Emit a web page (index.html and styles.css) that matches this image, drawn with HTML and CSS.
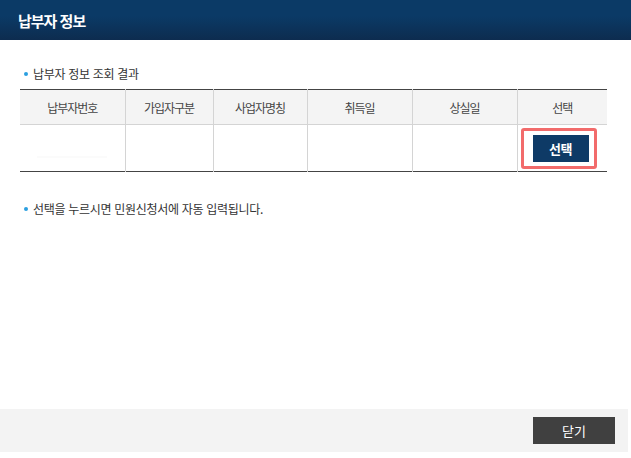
FILE: index.html
```html
<!DOCTYPE html>
<html lang="ko">
<head>
<meta charset="utf-8">
<title>납부자 정보</title>
<link rel="stylesheet" href="styles.css">
</head>
<body>
<div class="popup">
  <header class="pop-head"><h1>납부자 정보</h1></header>
  <main class="pop-body">
    <p class="bullet first">납부자 정보 조회 결과</p>
    <table class="result">
      <colgroup>
        <col class="c1"><col class="c2"><col class="c3"><col class="c4"><col class="c5"><col class="c6">
      </colgroup>
      <thead>
        <tr><th>납부자번호</th><th>가입자구분</th><th>사업자명칭</th><th>취득일</th><th>상실일</th><th>선택</th></tr>
      </thead>
      <tbody>
        <tr>
          <td><span class="blur"></span></td><td></td><td></td><td></td><td></td>
          <td class="sel"><span class="hl"><button class="btn-sel" type="button">선택</button></span></td>
        </tr>
      </tbody>
    </table>
    <p class="bullet second">선택을 누르시면 민원신청서에 자동 입력됩니다.</p>
  </main>
  <footer class="pop-foot"><button class="btn-close" type="button">닫기</button></footer>
</div>
</body>
</html>
```

FILE: styles.css
```css
* { box-sizing: border-box; }
html, body { margin: 0; padding: 0; background: #fff; }
body {
  font-family: "Noto Sans CJK KR", "Noto Sans", "Liberation Sans", sans-serif;
  color: #333;
  width: 631px;
  height: 458px;
  overflow: hidden;
}
.popup {
  display: flex;
  flex-direction: column;
  height: 458px;
}
.pop-head {
  height: 40px;
  width: 631px;
  background: linear-gradient(#0b3a66 0%, #0b3a66 40%, #0d2c4f 100%);
  display: flex;
  align-items: center;
  padding-left: 18px;
}
.pop-head h1 {
  margin: 0;
  color: #fff;
  font-size: 15px;
  font-weight: 700;
  letter-spacing: -1px;
  line-height: 1;
}
.pop-body {
  flex: 1;
  width: 628px;
  padding: 26px 21px 0 20px;
}
.bullet {
  margin: 0;
  font-size: 12px;
  line-height: 16px;
  color: #333;
  letter-spacing: -0.3px;
  display: flex;
  align-items: center;
  gap: 5px;
  padding-left: 4px;
}
.bullet::before {
  content: "";
  width: 4px;
  height: 4px;
  border-radius: 50%;
  background: #2b9fe0;
}
.bullet.first { margin-bottom: 7px; }
.bullet.second { margin-top: 29px; }
.result {
  width: 587px;
  border-collapse: collapse;
  table-layout: fixed;
  border-top: 1px solid #444;
  border-bottom: 1px solid #444;
  font-size: 12px;
}
.c1 { width: 105px; }
.c2 { width: 88px; }
.c3 { width: 94px; }
.c4 { width: 105px; }
.c5 { width: 105px; }
.c6 { width: 90px; }
.result th {
  height: 35px;
  background: #f4f4f4;
  font-weight: 400;
  color: #444;
  border-left: 1px solid #d4d4d4;
  border-bottom: 1px solid #d4d4d4;
  padding: 0;
  letter-spacing: -1px;
}
.result td {
  height: 47px;
  border-left: 1px solid #d4d4d4;
  padding: 0;
  text-align: center;
}
.result th:first-child, .result td:first-child { border-left: 0; }
.blur {
  display: inline-block;
  width: 70px;
  height: 2px;
  background: #fbfbfb;
  margin-top: 20px;
}
.result td.sel { text-align: left; padding-left: 3px; }
.hl {
  display: inline-flex;
  border: 3px solid #f26b6b;
  border-radius: 3px;
  padding: 4px 5px 4px 9px;
  vertical-align: middle;
}
.btn-sel {
  width: 56px;
  height: 27px;
  border: 0;
  margin: 0;
  padding: 0;
  background: #0e3a66;
  color: #fff;
  font-family: inherit;
  font-size: 13px;
  font-weight: 700;
  letter-spacing: -0.5px;
}
.pop-foot {
  width: 628px;
  height: 43px;
  margin-bottom: 6px;
  background: #f3f3f3;
  display: flex;
  align-items: center;
  justify-content: flex-end;
  padding-right: 13px;
}
.btn-close {
  width: 82px;
  height: 27px;
  border: 0;
  margin: 0;
  padding: 0;
  background: #404040;
  color: #fff;
  font-family: inherit;
  font-size: 13px;
}
```
